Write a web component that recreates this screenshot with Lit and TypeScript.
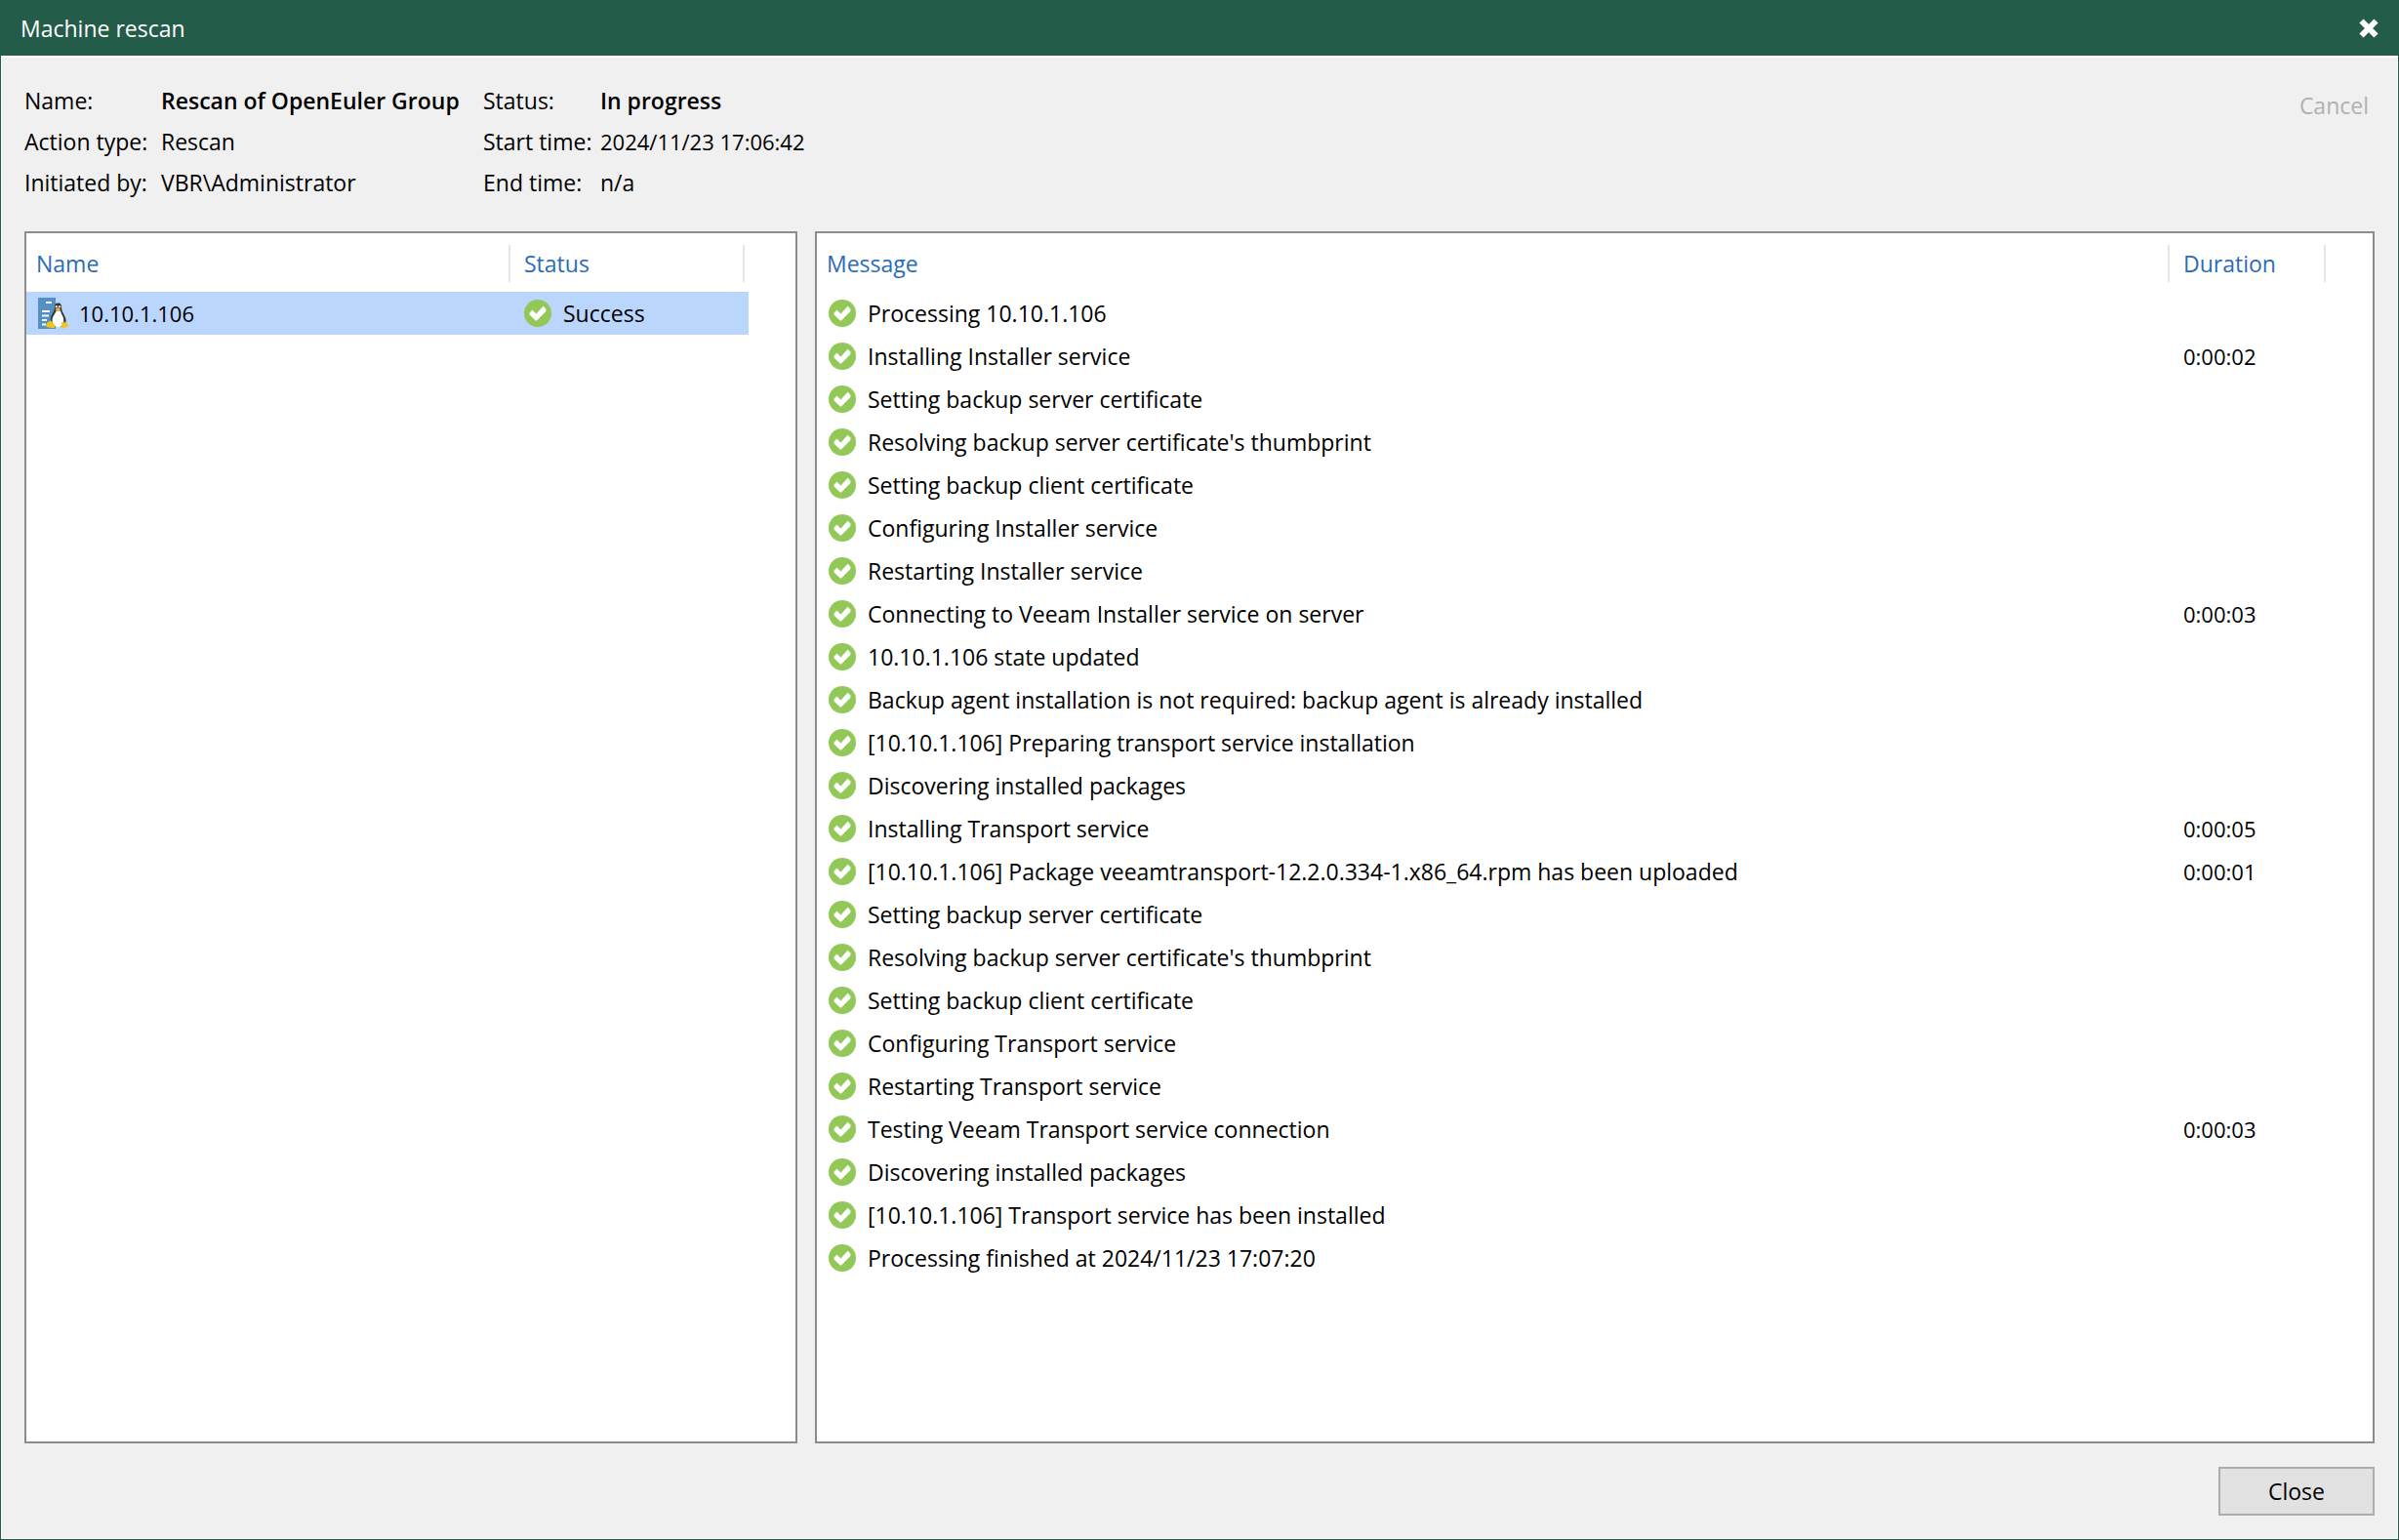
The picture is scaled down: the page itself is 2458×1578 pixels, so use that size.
import { LitElement, html, css, svg } from "lit";
import { customElement, property } from "lit/decorators.js";

interface LogEntry {
  message: string;
  duration?: string;
}

const LOG: LogEntry[] = [
  { message: "Processing 10.10.1.106" },
  { message: "Installing Installer service", duration: "0:00:02" },
  { message: "Setting backup server certificate" },
  { message: "Resolving backup server certificate's thumbprint" },
  { message: "Setting backup client certificate" },
  { message: "Configuring Installer service" },
  { message: "Restarting Installer service" },
  { message: "Connecting to Veeam Installer service on server", duration: "0:00:03" },
  { message: "10.10.1.106 state updated" },
  { message: "Backup agent installation is not required: backup agent is already installed" },
  { message: "[10.10.1.106] Preparing transport service installation" },
  { message: "Discovering installed packages" },
  { message: "Installing Transport service", duration: "0:00:05" },
  { message: "[10.10.1.106] Package veeamtransport-12.2.0.334-1.x86_64.rpm has been uploaded", duration: "0:00:01" },
  { message: "Setting backup server certificate" },
  { message: "Resolving backup server certificate's thumbprint" },
  { message: "Setting backup client certificate" },
  { message: "Configuring Transport service" },
  { message: "Restarting Transport service" },
  { message: "Testing Veeam Transport service connection", duration: "0:00:03" },
  { message: "Discovering installed packages" },
  { message: "[10.10.1.106] Transport service has been installed" },
  { message: "Processing finished at 2024/11/23 17:07:20" },
];

const successIcon = svg`
  <svg class="ok" viewBox="0 0 28 28" width="28" height="28" aria-hidden="true">
    <circle cx="14" cy="14" r="14" fill="#92c858"></circle>
    <path d="M5.5 13.5 L8.5 10.5 L12.4 14.6 L19.6 6.8 L22.4 9.6 V12 L13 21.6 H11.8 L5.5 15.6 Z" fill="#fff"></path>
  </svg>`;

const linuxHostIcon = svg`
  <svg class="host" viewBox="0 0 32 32" width="32" height="32" aria-hidden="true">
    <rect x="0" y="0" width="18" height="32" fill="#5590c4"></rect>
    <path d="M8 5 H14 M4 14 H12 M4 18.500 H11 M4 23 H9 M4 27.500 H8" stroke="#fff" stroke-width="1.800" fill="none"></path>
    <path d="M20.500 5.500 C17.600 5.500 16.600 7.500 16.900 10.500 C17.100 13.500 14.500 16 13.200 20 C12 23.500 12.500 28 15 29.500 H26 C29 28 29.300 23.500 27.800 20 C26.500 16.600 24 14 24.100 10.500 C24.200 7.500 23.400 5.500 20.500 5.500 Z" fill="#34363b"></path>
    <path d="M18.500 13.500 C17.500 17 14.500 19 14.500 23.500 C14.500 27.500 17.500 30 20.500 30 C24 30 26.300 27.500 26.300 23.500 C26.300 19 23.500 17 23 13.500 Z" fill="#fff"></path>
    <circle cx="18.800" cy="9.300" r="1.200" fill="#d9dde0"></circle>
    <circle cx="22" cy="9.300" r="1.200" fill="#d9dde0"></circle>
    <path d="M17.500 12 L20.300 10.300 L23.300 12 L20.300 14.300 Z" fill="#f3c01c"></path>
    <path d="M12.500 23.200 C14 24 16 27 17.300 28.300 C18 30 16.800 31.600 14.800 31.200 C12.500 30.600 10 30.600 8.600 30 C7.800 29 8.700 28 8.600 26.400 C9.500 25.400 11 25.600 12.500 23.200 Z" fill="#f0c41f"></path>
    <path d="M24.300 24.800 C25.600 26 27 26 28.300 24.600 C29 26.500 30.800 27.200 31.600 28 C31.400 29.600 28.300 30 26.800 31.500 C24.700 32 23.700 30.600 23.900 28.800 Z" fill="#f0c41f"></path>
  </svg>`;

const tableStyles = css`
  table {
    border-collapse: collapse;
    border-spacing: 0;
    table-layout: fixed;
  }
  th,
  td {
    padding: 0;
    text-align: left;
    font-weight: 400;
    white-space: nowrap;
  }
  th {
    height: 58px;
    padding-top: 2px;
    color: #2b6cb8;
  }
  .head {
    display: flex;
    align-items: center;
    height: 38px;
    padding-left: 10px;
    border-right: 2px solid #e5e5e5;
  }
  .head.inset {
    padding-left: 14px;
  }
  td {
    height: 44px;
  }
  .cell {
    display: flex;
    align-items: center;
    gap: 12px;
    padding-left: 12px;
  }
  .cell.inset {
    padding-left: 14px;
  }
  .numeric {
    font-size: 22px;
  }
  .ok,
  .host {
    display: block;
    flex: none;
  }
`;

@customElement("machine-list")
export class MachineList extends LitElement {
  static styles = [
    tableStyles,
    css`
      :host {
        display: block;
      }
      table {
        width: calc(100% - 48px);
      }
      .status-col {
        width: 244px;
      }
      .status-head {
        margin-right: 4px;
      }
      .selected {
        background: #bbd6fc;
      }
      .name {
        gap: 10px;
      }
    `,
  ];

  render() {
    return html`
      <table aria-label="Machines">
        <colgroup>
          <col />
          <col class="status-col" />
        </colgroup>
        <thead>
          <tr>
            <th scope="col"><div class="head">Name</div></th>
            <th scope="col"><div class="head inset status-head">Status</div></th>
          </tr>
        </thead>
        <tbody>
          <tr class="selected">
            <td><div class="cell name">${linuxHostIcon}<span class="numeric">10.10.1.106</span></div></td>
            <td><div class="cell inset">${successIcon}<span>Success</span></div></td>
          </tr>
        </tbody>
      </table>
    `;
  }
}

@customElement("message-log")
export class MessageLog extends LitElement {
  static styles = [
    tableStyles,
    css`
      :host {
        display: block;
      }
      table {
        width: calc(100% - 48px);
      }
      .duration-col {
        width: 160px;
      }
    `,
  ];

  @property({ attribute: false }) entries: LogEntry[] = [];

  render() {
    return html`
      <table aria-label="Messages">
        <colgroup>
          <col />
          <col class="duration-col" />
        </colgroup>
        <thead>
          <tr>
            <th scope="col"><div class="head">Message</div></th>
            <th scope="col"><div class="head inset">Duration</div></th>
          </tr>
        </thead>
        <tbody>
          ${this.entries.map(
            (entry) => html`
              <tr>
                <td><div class="cell">${successIcon}<span>${entry.message}</span></div></td>
                <td><div class="cell inset numeric">${entry.duration ?? ""}</div></td>
              </tr>
            `
          )}
        </tbody>
      </table>
    `;
  }
}

@customElement("app-root")
export class AppRoot extends LitElement {
  static styles = css`
    :host {
      display: flex;
      flex-direction: column;
      box-sizing: border-box;
      min-height: 100vh;
      border: 1px solid #245c4a;
      box-shadow: inset 0 0 0 1px #fbfbfb;
      background: #f0f0f0;
      color: #000;
      font: 400 23px/32px "Open Sans", "Noto Sans", sans-serif;
    }
    button {
      font: inherit;
      cursor: pointer;
    }
    .titlebar {
      display: flex;
      align-items: center;
      justify-content: space-between;
      height: 56px;
      padding: 0 20px;
      background: #245c4a;
      border-bottom: 2px solid #fff;
      color: #fff;
    }
    h1 {
      margin: 0;
      font: inherit;
    }
    .dismiss {
      display: flex;
      padding: 0;
      border: 0;
      background: none;
    }
    .summary {
      display: flex;
      justify-content: space-between;
      align-items: flex-start;
      padding: 23px 30px 29px 24px;
    }
    dl {
      display: grid;
      grid-template-columns: 140px 330px 120px auto;
      grid-auto-rows: 42px;
      align-items: center;
      margin: 0;
      white-space: nowrap;
    }
    dt,
    dd {
      margin: 0;
    }
    .strong {
      font-weight: 600;
    }
    .numeric {
      font-size: 22px;
    }
    .cancel {
      margin-top: 10px;
      padding: 0;
      border: 0;
      background: none;
      color: #b0b0b0;
      cursor: default;
    }
    .panels {
      display: grid;
      flex: 1;
      grid-template-columns: 792fr 1598fr;
      gap: 18px;
      padding: 0 24px;
    }
    .panel {
      border: 2px solid #8c8c8c;
      background: #fff;
    }
    .actions {
      display: flex;
      justify-content: flex-end;
      padding: 24px;
    }
    .close {
      width: 160px;
      height: 50px;
      padding: 0;
      border: 2px solid #adadad;
      background: #e1e1e1;
      color: #000;
    }
  `;

  render() {
    return html`
      <header class="titlebar">
        <h1>Machine rescan</h1>
        <button class="dismiss" type="button" aria-label="Close window">
          <svg viewBox="0 0 20 20" width="20" height="20" aria-hidden="true">
            <path d="M2.500 2.500 L17.500 17.500 M17.500 2.500 L2.500 17.500" stroke="#fff" stroke-width="6"></path>
          </svg>
        </button>
      </header>
      <section class="summary">
        <dl>
          <dt>Name:</dt>
          <dd class="strong">Rescan of OpenEuler Group</dd>
          <dt>Status:</dt>
          <dd class="strong">In progress</dd>
          <dt>Action type:</dt>
          <dd>Rescan</dd>
          <dt>Start time:</dt>
          <dd class="numeric">2024/11/23 17:06:42</dd>
          <dt>Initiated by:</dt>
          <dd>VBR\\Administrator</dd>
          <dt>End time:</dt>
          <dd>n/a</dd>
        </dl>
        <button class="cancel" type="button" disabled>Cancel</button>
      </section>
      <main class="panels">
        <machine-list class="panel"></machine-list>
        <message-log class="panel" .entries=${LOG}></message-log>
      </main>
      <footer class="actions">
        <button class="close" type="button">Close</button>
      </footer>
    `;
  }
}
